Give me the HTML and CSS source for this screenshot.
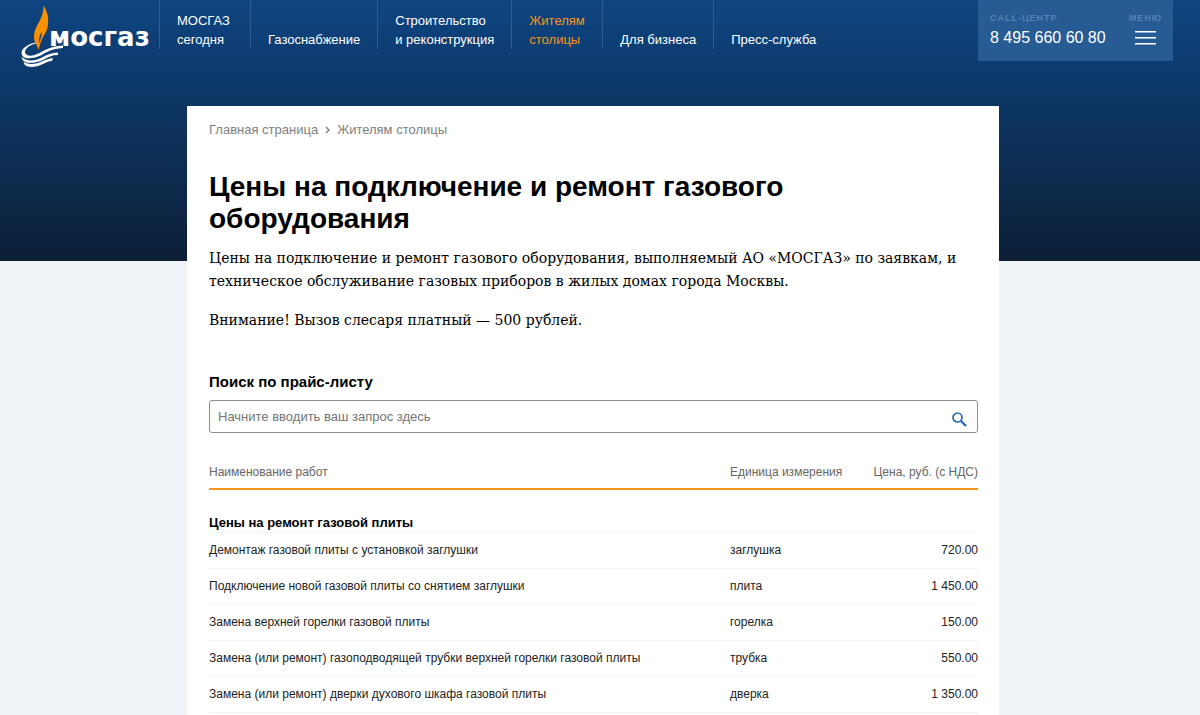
FILE: index.html
```html
<!DOCTYPE html>
<html lang="ru">
<head>
<meta charset="utf-8">
<title>Цены на подключение и ремонт газового оборудования</title>
<link rel="stylesheet" href="styles.css">
</head>
<body>
<header class="header">
  <a class="logo" href="#" aria-label="мосгаз">
    <svg class="logo-mark" viewBox="0 0 46 66" aria-hidden="true">
      <path fill="#f99000" d="M22.500 4C25 9 27.500 14 27.200 20C27 25 26.500 28 25 31C22.500 35 19 41 17.700 49.500C17 45 13 42 13 36C13 28 17 24 20 17C22 12 22.500 9 22.500 4Z"/>
      <path fill="#11437c" d="M20.500 31C18 35 17.500 39 18.500 43C18.800 39 21 36 20.500 31Z"/>
      <path fill="#fff" d="M14.500 41.500C7 43 1 47 .5 51.500C.5 54 2 56.500 5 57C13 58 19 55 25 51.500C31 48.500 36 47.500 42 47L42 44.500C35 45 29 46.500 23 49.500C17 53 11 56 6 54C1 51 6 44.500 14.500 42.500Z"/>
      <path fill="#fff" d="M.5 55.500C5 60.500 13 60.500 21 56.500C26 53.500 31 52 37 51.500L37 54C31 54 27 56 22 59C14 62.500 5 63 1.500 59Z"/>
      <path fill="#fff" d="M2.500 61C8 64 15 63.500 22 60C25 58.500 28 57.500 32 57L31 60C27 60 25 61.500 22 63C15 66.500 6 67 3.500 63.500Z"/>
    </svg>
    <span class="logo-name">мосгаз</span>
  </a>
  <nav class="nav">
    <a class="nav-link" href="#">МОСГАЗ<br>сегодня</a>
    <a class="nav-link" href="#">Газоснабжение</a>
    <a class="nav-link" href="#">Строительство<br>и реконструкция</a>
    <a class="nav-link nav-link-active" href="#">Жителям<br>столицы</a>
    <a class="nav-link" href="#">Для бизнеса</a>
    <a class="nav-link" href="#">Пресс-служба</a>
  </nav>
  <div class="contact">
    <div class="call">
      <span class="caption">CALL-ЦЕНТР</span>
      <a class="phone" href="tel:+74956606080">8 495 660 60 80</a>
    </div>
    <button class="menu" type="button">
      <span class="caption">МЕНЮ</span>
      <svg class="menu-icon" viewBox="0 0 21 14" aria-hidden="true"><path fill="#fff" d="M0 0H21V1.500H0ZM0 6H21V7.500H0ZM0 12H21V13.500H0Z"/></svg>
    </button>
  </div>
</header>
<div class="page">
  <main class="card">
    <nav class="crumbs" aria-label="Навигация">
      <a class="crumb" href="#">Главная страница</a>
      <svg class="crumb-arrow" viewBox="0 0 5 8" aria-hidden="true"><path fill="none" stroke="#777" stroke-width="1.300" d="M1 1L4 4L1 7"/></svg>
      <a class="crumb" href="#">Жителям столицы</a>
    </nav>
    <h1 class="title">Цены на подключение и ремонт газового оборудования</h1>
    <div class="intro">
      <p class="text">Цены на подключение и ремонт газового оборудования, выполняемый АО «МОСГАЗ» по заявкам, и техническое обслуживание газовых приборов в жилых домах города Москвы.</p>
      <p class="text">Внимание! Вызов слесаря платный — 500 рублей.</p>
    </div>
    <form class="search">
      <label class="search-label" for="query">Поиск по прайс-листу</label>
      <div class="search-box">
        <input class="search-input" id="query" type="text" placeholder="Начните вводить ваш запрос здесь">
        <button class="search-button" type="button" aria-label="Найти">
          <svg class="search-icon" viewBox="0 0 15 15" aria-hidden="true"><g fill="none" stroke="#2469b8"><circle cx="5.500" cy="5.500" r="4.500" stroke-width="1.700"/><path stroke-width="2.200" d="M9 9L14 14"/></g></svg>
        </button>
      </div>
    </form>
    <table class="prices">
      <thead>
        <tr class="head-row"><th class="col-name" scope="col">Наименование работ</th><th class="col-unit" scope="col">Единица измерения</th><th class="col-price" scope="col">Цена, руб. (с НДС)</th></tr>
      </thead>
      <tbody>
        <tr class="group-row"><th colspan="3" scope="colgroup">Цены на ремонт газовой плиты</th></tr>
        <tr class="row"><td>Демонтаж газовой плиты с установкой заглушки</td><td>заглушка</td><td class="price">720.00</td></tr>
        <tr class="row"><td>Подключение новой газовой плиты со снятием заглушки</td><td>плита</td><td class="price">1 450.00</td></tr>
        <tr class="row"><td>Замена верхней горелки газовой плиты</td><td>горелка</td><td class="price">150.00</td></tr>
        <tr class="row"><td>Замена (или ремонт) газоподводящей трубки верхней горелки газовой плиты</td><td>трубка</td><td class="price">550.00</td></tr>
        <tr class="row"><td>Замена (или ремонт) дверки духового шкафа газовой плиты</td><td>дверка</td><td class="price">1 350.00</td></tr>
      </tbody>
    </table>
  </main>
</div>
</body>
</html>
```
FILE: styles.css
```css
* { box-sizing: border-box; }

body {
  margin: 0;
  background: #f0f4f8;
  color: #000;
  font-family: "Liberation Sans", Arial, sans-serif;
  font-size: 13px;
}

a { color: inherit; text-decoration: none; }

.header {
  display: flex;
  align-items: flex-start;
  min-height: 261px;
  padding: 0 27px 0 21px;
  background: linear-gradient(#0e4582, #0c1f36);
  color: #fff;
}

.logo {
  display: flex;
  flex: none;
  width: 138px;
  padding-top: 1px;
}

.logo-mark { flex: none; width: 46px; height: 66px; margin-right: -18px; }

.logo-name {
  padding-top: 22px;
  font: bold 26px/28px "DejaVu Sans", sans-serif;
}

.nav { display: flex; flex: 1; }

.nav-link {
  display: flex;
  align-items: flex-end;
  min-width: 91px;
  height: 49px;
  padding: 0 17px;
  border-left: 1px solid #2f5d90;
  line-height: 19px;
  white-space: nowrap;
}

.nav-link-active { color: #f7941d; }

.contact {
  display: flex;
  justify-content: space-between;
  flex: none;
  width: 195px;
  padding: 12px 11px 11px 12px;
  background: #265b94;
}

.call { display: flex; flex-direction: column; }

.caption {
  color: #5783b3;
  font-size: 9px;
  font-weight: bold;
  line-height: 13px;
  letter-spacing: 1px;
}

.phone { font-size: 16px; line-height: 25px; white-space: nowrap; }

.menu {
  display: flex;
  flex-direction: column;
  align-items: center;
  gap: 6px;
  padding: 0;
  border: 0;
  background: none;
  font-family: inherit;
}

.menu-icon { width: 21px; height: 14px; }

.page { padding-right: 14px; }

.card {
  max-width: 812px;
  min-height: 609px;
  margin: -155px auto 0;
  padding: 16px 21px 0 22px;
  background: #fff;
}

.crumbs {
  display: flex;
  align-items: center;
  gap: 7px;
  color: #808080;
  line-height: 16px;
}

.crumb-arrow { width: 5px; height: 8px; }

.title {
  margin: 33px 0 12px;
  font-size: 28px;
  line-height: 32px;
}

.text {
  margin: 0 0 16px;
  font: 14px/23px "DejaVu Serif", serif;
}

.search { margin-top: 40px; }

.search-label {
  display: block;
  font-size: 15px;
  font-weight: bold;
  line-height: 20px;
}

.search-box {
  display: flex;
  height: 33px;
  margin-top: 8px;
  border: 1px solid #8e8e8e;
  border-radius: 3px;
}

.search-input {
  flex: 1;
  min-width: 0;
  padding: 0 8px;
  border: 0;
  background: none;
  font: 13px "Liberation Sans", Arial, sans-serif;
}

.search-input::placeholder { color: #757575; opacity: 1; }

.search-button {
  padding: 6px 10px 0 11px;
  border: 0;
  background: none;
}

.search-icon { display: block; width: 15px; height: 15px; }

.prices {
  width: 100%;
  margin-top: 32px;
  border-collapse: separate;
  border-spacing: 0;
  table-layout: fixed;
}

.prices th,
.prices td { padding: 0; text-align: left; }

.prices .head-row th {
  height: 25px;
  padding-bottom: 8px;
  border-bottom: 2px solid #f7941d;
  color: #666;
  font-size: 12px;
  font-weight: normal;
  line-height: 15px;
}

.col-unit { width: 128px; }
.prices .col-price { width: 120px; text-align: right; }

.prices .group-row th {
  height: 43px;
  padding-top: 24px;
  border-bottom: 1px solid #f2f2f2;
  line-height: 18px;
}

.prices .row td {
  height: 36px;
  padding-bottom: 2px;
  border-bottom: 1px solid #f2f2f2;
  color: #222;
  font-size: 12px;
  line-height: 16px;
}

.prices .row .price { text-align: right; }
```
